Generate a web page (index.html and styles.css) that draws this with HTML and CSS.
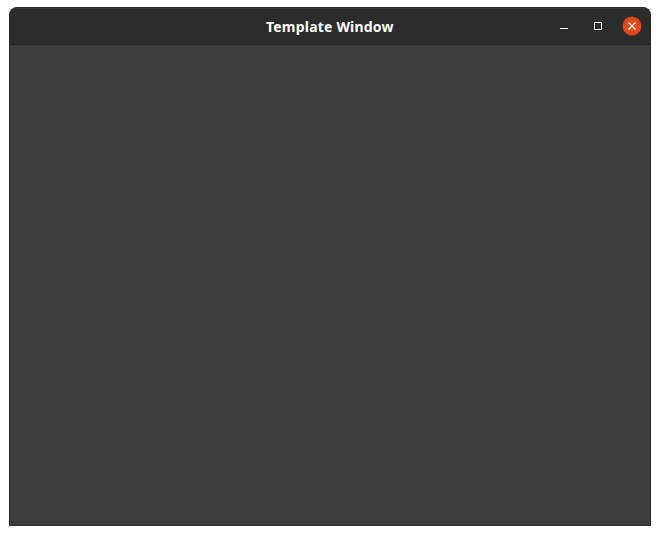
FILE: index.html
```html
<!DOCTYPE html>
<html lang="en">
<head>
<meta charset="utf-8">
<title>Template Window</title>
<link rel="stylesheet" href="styles.css">
</head>
<body>
<main class="window">
  <header class="titlebar">
    <h1 class="title">Template Window</h1>
    <div class="controls">
      <button class="control" aria-label="Minimize"><svg width="20" height="20" viewBox="0 0 20 20"><path d="M6 12.5h8" stroke="#fff"/></svg></button>
      <button class="control" aria-label="Maximize"><svg width="20" height="20" viewBox="0 0 20 20"><path d="M6.5 6.5h7v7h-7z" fill="none" stroke="#fff"/></svg></button>
      <button class="control" aria-label="Close"><svg width="20" height="20" viewBox="0 0 20 20"><circle cx="10" cy="10" r="9.4" fill="#e04a16"/><path d="M6.5 6.5l7 7M13.5 6.5l-7 7" stroke="#fff" stroke-width="1.4"/></svg></button>
    </div>
  </header>
  <section class="content"></section>
</main>
</body>
</html>
```
FILE: styles.css
```css
* { box-sizing: border-box; }
body { margin: 0; padding: 7px 9px 9px; background: #fff; }
.window {
  display: flex;
  flex-direction: column;
  width: 642px;
  height: 519px;
  border: 1px solid #282828;
  border-bottom-color: #303030;
  border-radius: 8px 8px 0 0;
  background: #3d3d3d;
  overflow: hidden;
}
.titlebar {
  display: grid;
  grid-template-columns: 1fr 130px 1fr;
  flex: 0 0 37px;
  background: #2c2c2c;
  border-bottom: 1px solid #232323;
  box-shadow: inset 0 1px #383838;
}
.title {
  grid-column: 2;
  margin: 7px 0 0 1px;
  color: #fff;
  font: 700 14px/24px "Noto Sans", "Open Sans", sans-serif;
  letter-spacing: 0.2px;
  white-space: nowrap;
}
.controls {
  display: flex;
  justify-content: flex-end;
  gap: 14px;
  padding: 8px 8px 0 0;
}
.control {
  width: 20px;
  height: 20px;
  padding: 0;
  border: 0;
  background: none;
}
.control svg { display: block; }
.content { flex: 1; background: #3d3d3d; }
```
